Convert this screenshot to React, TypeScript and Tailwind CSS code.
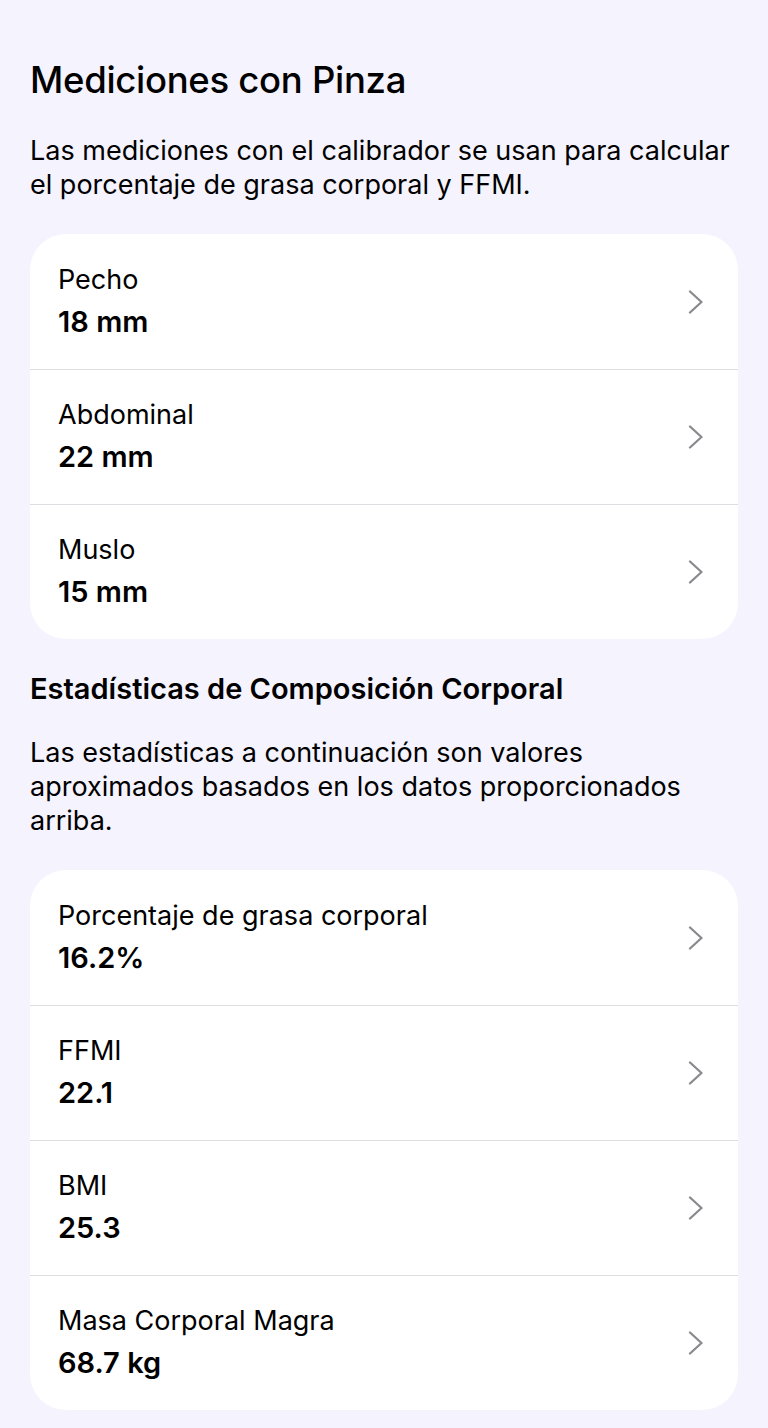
import React from 'react';

type Item = { label: string; value: string };

const medidas: Item[] = [
  { label: 'Pecho', value: '18 mm' },
  { label: 'Abdominal', value: '22 mm' },
  { label: 'Muslo', value: '15 mm' },
];

const estadisticas: Item[] = [
  { label: 'Porcentaje de grasa corporal', value: '16.2%' },
  { label: 'FFMI', value: '22.1' },
  { label: 'BMI', value: '25.3' },
  { label: 'Masa Corporal Magra', value: '68.7 kg' },
];

function Chevron() {
  return (
    <svg width="18" height="24" viewBox="0 0 18 24" fill="none">
      <path d="M3 1.5 L14.5 12 L3 22.5" stroke="#8a8a8e" strokeWidth="2.3" strokeLinecap="round" strokeLinejoin="round" />
    </svg>
  );
}

function Card({ items }: { items: Item[] }) {
  return (
    <div className="bg-white rounded-[36px] overflow-hidden">
      {items.map((item, i) => (
        <div
          key={item.label}
          className={`flex items-center justify-between pl-[28px] pr-[33px] h-[135px] ${i > 0 ? 'border-t border-[#dedee2]' : ''}`}
        >
          <div className="flex flex-col gap-[8px]">
            <span className="text-[27px] leading-[32px] text-black">{item.label}</span>
            <span className="text-[29px] leading-[36px] font-semibold text-black">{item.value}</span>
          </div>
          <Chevron />
        </div>
      ))}
    </div>
  );
}

export default function App() {
  return (
    <div
      className="min-h-[1428px] bg-[#f5f3fd] px-[30px] pt-[59px] pb-[18px]"
      style={{ fontFamily: 'Inter, "Noto Sans", sans-serif' }}
    >
      <h1 className="text-[36.5px] leading-[42px] font-medium text-black tracking-[-0.3px]">Mediciones con Pinza</h1>
      <p className="mt-[33px] text-[27px] leading-[34px] text-black">
        Las mediciones con el calibrador se usan para calcular el porcentaje de grasa corporal y FFMI.
      </p>
      <div className="mt-[32px]">
        <Card items={medidas} />
      </div>
      <h2 className="mt-[32px] text-[29px] leading-[36px] font-semibold text-black">
        Estadísticas de Composición Corporal
      </h2>
      <p className="mt-[29px] text-[27px] leading-[34px] text-black">
        Las estadísticas a continuación son valores aproximados basados en los datos proporcionados arriba.
      </p>
      <div className="mt-[32px]">
        <Card items={estadisticas} />
      </div>
    </div>
  );
}
